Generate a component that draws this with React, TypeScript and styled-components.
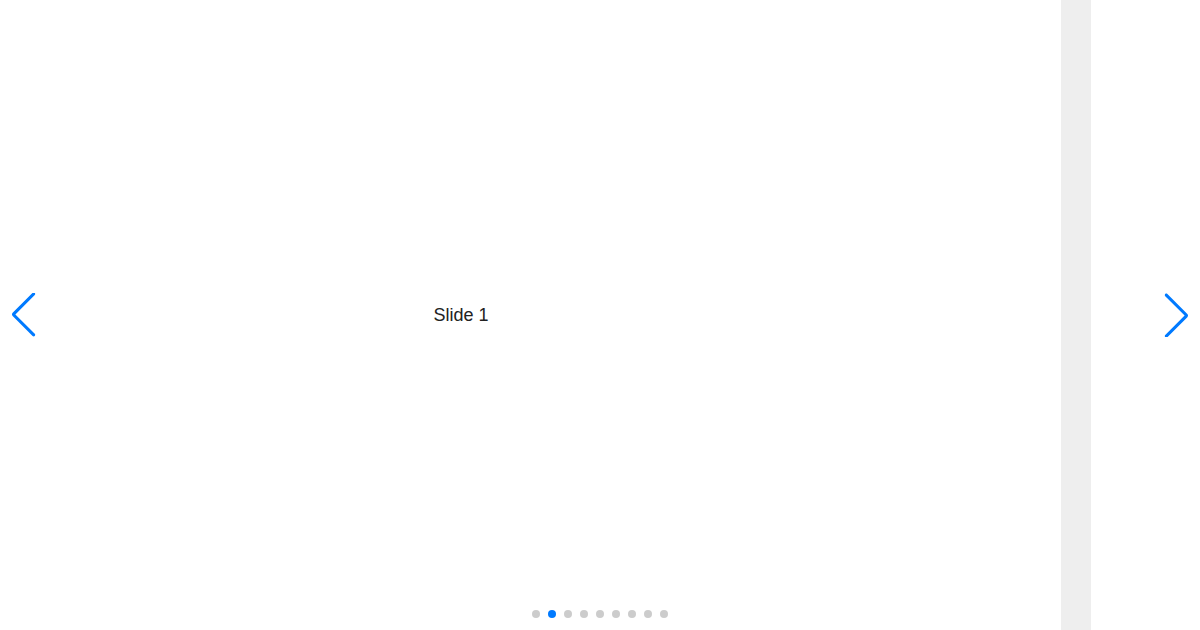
import { useState } from "react";
import styled, { createGlobalStyle } from "styled-components";

const GlobalStyle = createGlobalStyle`
  html, body {
    margin: 0;
    padding: 0;
    height: 100%;
    background: #eee;
    font-family: "Liberation Sans", Arial, sans-serif;
    font-size: 14px;
    color: #000;
  }
  #root {
    height: 100%;
  }
`;

const Swiper = styled.div`
  position: relative;
  width: 1200px;
  height: 630px;
  overflow: hidden;
  background: #eee;
`;

const Track = styled.div`
  display: flex;
  gap: 30px;
  height: 100%;
  transform: translateX(-139px);
`;

const Slide = styled.div`
  flex: 0 0 1200px;
  height: 100%;
  background: #fff;
  display: flex;
  align-items: center;
  justify-content: center;
  font-size: 18px;
  color: #222;
`;

const NavButton = styled.button<{ $side: "prev" | "next" }>`
  position: absolute;
  top: 50%;
  margin-top: -22px;
  ${(p) => (p.$side === "prev" ? "left: 10px;" : "right: 10px;")}
  width: 27px;
  height: 44px;
  padding: 0;
  border: 0;
  background: transparent;
  color: #007aff;
  display: flex;
  align-items: center;
  justify-content: center;
  cursor: pointer;

  svg {
    width: 100%;
    height: 100%;
    ${(p) => (p.$side === "prev" ? "transform: rotate(180deg);" : "")}
  }
`;

const Pagination = styled.div`
  position: absolute;
  left: 0;
  right: 0;
  bottom: 12px;
  display: flex;
  justify-content: center;
  gap: 8px;
`;

const Bullet = styled.span<{ $active: boolean }>`
  width: 8px;
  height: 8px;
  border-radius: 50%;
  background: ${(p) => (p.$active ? "#007aff" : "#ccc")};
  cursor: pointer;
`;

const ArrowIcon = () => (
  <svg viewBox="0 0 11 20" preserveAspectRatio="xMidYMid meet">
    <path
      d="M0.38296 20.0762C0.111788 19.805 0.111788 19.3654 0.38296 19.0942L9.19758 10.2796L0.38296 1.46497C0.111788 1.19379 0.111788 0.754138 0.38296 0.482966C0.654131 0.211794 1.09379 0.211794 1.36496 0.482966L10.4341 9.55214C10.8359 9.9539 10.8359 10.6053 10.4341 11.007L1.36496 20.0762C1.09379 20.3474 0.654131 20.3474 0.38296 20.0762Z"
      fill="currentColor"
    />
  </svg>
);

const slides = ["Slide 1", "Slide 2"];

const App = () => {
  const [active, setActive] = useState(1);

  return (
    <>
      <GlobalStyle />
      <Swiper>
        <Track>
          {slides.map((s) => (
            <Slide key={s}>{s}</Slide>
          ))}
        </Track>
        <NavButton $side="prev" onClick={() => setActive((a) => Math.max(0, a - 1))}>
          <ArrowIcon />
        </NavButton>
        <NavButton $side="next" onClick={() => setActive((a) => Math.min(8, a + 1))}>
          <ArrowIcon />
        </NavButton>
        <Pagination>
          {Array.from({ length: 9 }).map((_, i) => (
            <Bullet key={i} $active={i === active} onClick={() => setActive(i)} />
          ))}
        </Pagination>
      </Swiper>
    </>
  );
};

export default App;
